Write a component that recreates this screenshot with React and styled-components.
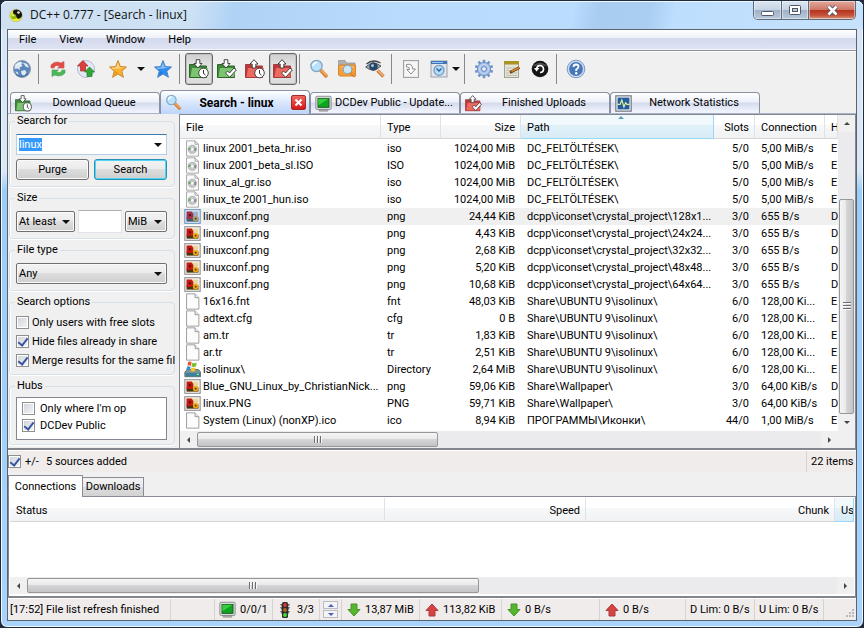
import React, { useEffect, useRef } from 'react';
import styled, { createGlobalStyle, css } from 'styled-components';

const GlobalStyle = createGlobalStyle`
  * { box-sizing: border-box; }
  body {
    margin: 0;
    background: #1d2b3c;
    font-family: Roboto, "Liberation Sans", sans-serif;
    font-size: 11px;
    line-height: 14px;
    color: #000;
  }
  button, input, select, table { font: inherit; color: inherit; }
  svg { display: block; flex: none; }
`;

/* ---------- window frame ---------- */

const Window = styled.div`
  min-height: 100vh;
  display: flex;
  flex-direction: column;
  border: 1px solid #1d2b3c;
  border-radius: 7px;
  padding: 0 6px 6px;
  background: linear-gradient(180deg, #d5e5f7 0, #dbe8f6 170px, #9cccf8 190px, #a9d3fb 100%);
  box-shadow: inset 0 0 0 1px #eef7ff;
`;

const TitleBar = styled.header`
  height: 28px;
  margin: 0 -6px;
  padding-left: 8px;
  display: flex;
  align-items: flex-start;
  gap: 7px;
  border-radius: 6px 6px 0 0;
  box-shadow: inset 0 1px 0 #f0f8ff;
  background: linear-gradient(100deg, #cfe0f1 0, #cde1f5 190px, #b0d3f5 230px, #b9dcfd 400px, #badcfd 565px, #a8cdf1 590px, #a9cef2 640px, #bddefd 665px, #c6e2fc 100%);
`;

const Title = styled.h1`
  flex: 1;
  margin: 0;
  padding-top: 5px;
  font: 12px/18px "Open Sans", "Noto Sans", sans-serif;
  color: #111;
`;

const TitleIcon = styled.span`
  padding-top: 7px;
`;

const Caption = styled.div`
  display: flex;
  height: 19px;
  margin-right: 7px;
  border: 1px solid #5e6b7c;
  border-top: 0;
  border-radius: 0 0 5px 5px;
  overflow: hidden;
`;

const CaptionButton = styled.button`
  width: ${(p) => (p.$close ? 47 : 27)}px;
  padding: 0;
  border: 0;
  border-left: ${(p) => (p.$first ? '0' : '1px solid #5e6b7c')};
  display: grid;
  place-items: center;
  box-shadow: inset 0 0 0 1px rgba(255, 255, 255, 0.45);
  background: ${(p) =>
    p.$close
      ? 'linear-gradient(#e3a99b, #cf7767 48%, #b5301a 50%, #c5533d 80%, #d99a7e)'
      : 'linear-gradient(#dde7f2, #c7d4e4 48%, #a0b1c8 50%, #b9c9dc)'};
`;

const Client = styled.div`
  flex: 1;
  display: flex;
  flex-direction: column;
  min-width: 0;
  border: 1px solid #59646f;
  background: #f0f0f0;
`;

/* ---------- menu and toolbar ---------- */

const MenuBar = styled.nav`
  display: flex;
  height: 21px;
  padding-left: 3px;
  border-bottom: 1px solid #8d8f94;
  box-shadow: inset 0 -1px 0 #f4f6fb;
  background: linear-gradient(#fff, #eef1f8 40%, #d4daed 42%, #dfe4f4);
`;

const MenuItem = styled.button`
  border: 0;
  padding: 0 8px;
  margin-right: 7px;
  background: none;
`;

const ToolBar = styled.div`
  display: flex;
  height: 39px;
  padding-top: 2px;
  box-shadow: inset 0 1px 0 #fff;
`;

const ToolButton = styled.button`
  width: 28px;
  height: 32px;
  padding: 0;
  border: 1px solid transparent;
  border-radius: 3px;
  background: none;
  display: grid;
  place-items: center;
  ${(p) =>
    p.$pressed &&
    css`
      border-color: #63656a;
      background: linear-gradient(#cfcfcf, #e2e2e2 40%, #dcdcdc);
      box-shadow: inset 0 0 0 1px #c0c0c0;
    `}
`;

const DropButton = styled(ToolButton)`
  width: ${(p) => p.$width}px;
  margin-left: ${(p) => (p.$tight ? -4 : 0)}px;
`;

const ToolGap = styled.span`
  width: 4px;
`;

const ToolSeparator = styled.span`
  width: 1px;
  height: 30px;
  margin: 1px 5px 0 2px;
  background: #86888c;
`;

const Triangle = styled.span`
  width: 0;
  height: 0;
  border: ${(p) => p.$size || 4}px solid transparent;
  ${(p) => (p.$dir === 'up' ? 'border-top-width: 0' : p.$dir === 'left' ? 'border-left-width: 0' : p.$dir === 'right' ? 'border-right-width: 0' : 'border-bottom-width: 0')};
  border-${(p) => ({ up: 'bottom', left: 'right', right: 'left' }[p.$dir] || 'top')}-color: ${(p) => p.$color || '#111'};
`;

/* ---------- window tabs ---------- */

const TabStrip = styled.div`
  display: flex;
  align-items: flex-end;
  height: 24px;
  padding-left: 2px;
  border-bottom: 1px solid #a9b4cc;
`;

const Tab = styled.div`
  width: 150px;
  height: ${(p) => (p.$active ? 24 : 21)}px;
  margin-bottom: ${(p) => (p.$active ? -1 : 0)}px;
  display: flex;
  align-items: center;
  padding: 0 3px 0 4px;
  border: 1px solid #8b90a0;
  border-bottom: 0;
  border-radius: 4px 4px 0 0;
  font-weight: ${(p) => (p.$active ? 'bold' : 'normal')};
  font-size: ${(p) => (p.$active ? 12 : 11)}px;
  background: ${(p) =>
    p.$active
      ? 'linear-gradient(#fff, #d9e7fc 50%, #bdd5fb)'
      : 'linear-gradient(#fff, #edf0f9 46%, #d3daec 50%, #e4e9f6 75%, #f3f6fd)'};
`;

const TabLabel = styled.button`
  flex: 1;
  min-width: 0;
  padding: 0;
  border: 0;
  background: none;
  white-space: nowrap;
`;

const TabClose = styled.button`
  width: 15px;
  height: 15px;
  padding: 0;
  border: 1px solid #a32a25;
  border-radius: 2px;
  display: grid;
  place-items: center;
  background: linear-gradient(#ee6a60, #d8171a);
`;

/* ---------- search panel ---------- */

const Workspace = styled.main`
  flex: 1;
  display: flex;
  min-height: 0;
  border-bottom: 2px solid #83868c;
`;

const SearchPanel = styled.form`
  width: 171px;
  padding: 0 4px 0 1px;
  display: flex;
  flex-direction: column;
  gap: 4px;
`;

const Group = styled.fieldset`
  min-width: 0;
  margin: 0;
  padding: ${(p) => (p.$compact ? '4px 7px 4px 6px' : '6px 7px 6px 6px')};
  border: 1px solid #d5dfe5;
  border-radius: 4px;
  box-shadow: inset 1px 0 0 #fff, 0 1px 0 #fff;
`;

const Legend = styled.legend`
  padding: 0 2px;
  margin-left: -1px;
`;

const Row = styled.div`
  display: flex;
  gap: ${(p) => p.$gap || 0}px;
  margin-top: ${(p) => p.$top || 0}px;
`;

const Combo = styled.div`
  display: flex;
  flex: 1;
  min-width: 0;
  height: 21px;
  border: 1px solid #b5cfe7;
  border-top-color: #3d7bad;
  background: #fff;
`;

const ComboInput = styled.input`
  flex: 1;
  min-width: 0;
  height: 15px;
  margin: 2px 0 0 2px;
  padding: 0;
  border: 0;
  outline: 0;
  &::selection { background: #3399ff; color: #fff; }
`;

const ComboArrow = styled.button`
  width: 16px;
  padding: 0;
  border: 0;
  background: none;
  display: grid;
  place-items: center;
`;

const PushButton = styled.button`
  flex: 1;
  height: 21px;
  padding: 0;
  border: 1px solid ${(p) => (p.$default ? '#2a8fb5' : '#707070')};
  border-radius: 3px;
  background: linear-gradient(#f3f3f3, #ebebeb 48%, #dddddd 50%, #cfcfcf);
  box-shadow: inset 0 0 0 1px ${(p) => (p.$default ? '#52d4f9' : '#fafafa')};
`;

const Picker = styled.div`
  width: ${(p) => (p.$width ? `${p.$width}px` : 'auto')};
  flex: ${(p) => (p.$width ? 'none' : '1')};
  display: grid;
  align-items: center;
  > * { grid-area: 1 / 1; }
  > span { justify-self: end; margin-right: 5px; pointer-events: none; }
`;

const Select = styled.select`
  appearance: none;
  width: 100%;
  height: 21px;
  padding: 0 2px;
  border: 1px solid #707070;
  border-radius: 2px;
  background: linear-gradient(#f3f3f3, #ebebeb 48%, #dddddd 50%, #cfcfcf);
  box-shadow: inset 0 0 0 1px #fafafa;
`;

const SizeInput = styled.input`
  flex: 1;
  min-width: 0;
  height: 23px;
  margin: -1px 0;
  border: 1px solid #e2e3ea;
  border-top-color: #abadb3;
  background: #fff;
`;

const CheckLine = styled.label`
  display: flex;
  align-items: center;
  gap: ${(p) => p.$gap || 3}px;
  height: ${(p) => p.$height}px;
  white-space: nowrap;
`;

const CheckBox = styled.input`
  appearance: none;
  flex: none;
  width: 13px;
  height: 13px;
  margin: 0;
  border: 1px solid #8e8f8f;
  box-shadow: inset 0 0 0 1px #fff;
  background: linear-gradient(135deg, #cdd2da, #f6f6f8);
  display: grid;
  place-items: center;
  &:checked::after {
    content: '';
    width: 4px;
    height: 8px;
    margin-bottom: 2px;
    border: solid #3c55a0;
    border-width: 0 2px 2px 0;
    transform: rotate(38deg);
  }
`;

const HubBox = styled.div`
  height: 43px;
  padding: 2px 5px;
  border: 1px solid #828790;
  background: #fff;
`;

/* ---------- results ---------- */

const ListFrame = styled.section`
  flex: 1;
  min-width: 0;
  display: grid;
  grid-template: minmax(0, 1fr) 17px / minmax(0, 1fr) 17px;
  border: 1px solid #828790;
  border-bottom: 0;
  background: #fff;
`;

const Scroller = styled.div`
  overflow: hidden;
`;

const Table = styled.table`
  width: 100%;
  table-layout: fixed;
  border-collapse: separate;
  border-spacing: 0;
`;

const HeadCell = styled.th`
  height: 24px;
  padding: 2px 5px 0 6px;
  font-weight: normal;
  text-align: ${(p) => p.$align || 'left'};
  white-space: nowrap;
  overflow: hidden;
  border-right: 1px solid ${(p) => (p.$hot ? '#96d9f9' : '#e0e3e6')};
  border-bottom: 1px solid ${(p) => (p.$hot ? '#96d9f9' : '#d5d5d5')};
  background: ${(p) =>
    p.$hot
      ? 'linear-gradient(#f2f9fc 0, #f2f9fc 42%, #e1f1f9 44%, #d8ecf6)'
      : 'linear-gradient(#fff 0, #fff 42%, #f7f8fa 44%, #f1f2f4)'};
`;

const SortedHead = styled.div`
  display: flex;
  position: relative;
  > span:last-child { position: absolute; left: 50%; top: -5px; }
`;

const Cell = styled.td`
  height: 17px;
  padding: 0 ${(p) => (p.$align ? 6 : 0)}px 0 6px;
  text-align: ${(p) => p.$align || 'left'};
  white-space: nowrap;
  overflow: hidden;
  text-overflow: ellipsis;
  background: ${(p) => (p.$marked ? '#f0f0f0' : 'transparent')};
`;

const FileCell = styled.div`
  display: flex;
  align-items: center;
  gap: 2px;
  height: 17px;
  margin-left: -2px;
`;

const Gutter = styled.tr`
  height: 1px;
`;

const HBar = styled.div`
  display: flex;
  align-items: center;
  height: 17px;
  min-width: 0;
  background: #ebebed;
`;

const VBar = styled(HBar)`
  flex-direction: column;
  height: auto;
`;

const BarCorner = styled.span`
  background: #f0f0f0;
`;

const BarButton = styled.button`
  width: 17px;
  height: 17px;
  flex: none;
  padding: 0;
  border: 0;
  display: grid;
  place-items: center;
  background: #f0f0f0;
`;

const Space = styled.span`
  flex: ${(p) => p.$grow};
`;

const Thumb = styled.div`
  flex: ${(p) => p.$grow};
  display: flex;
  flex-direction: ${(p) => (p.$vertical ? 'column' : 'row')};
  align-items: center;
  justify-content: center;
  gap: 1px;
  ${(p) => (p.$vertical ? 'width: 15px' : 'height: 15px')};
  border: 1px solid #979797;
  border-radius: 2px;
  background: linear-gradient(${(p) => (p.$vertical ? '90deg' : '180deg')}, #f5f5f5, #e9e9eb 48%, #d5d5d8 50%, #c4c4c8);
  > i {
    ${(p) => (p.$vertical ? 'width: 8px; height: 2px' : 'width: 2px; height: 7px')};
    background: linear-gradient(${(p) => (p.$vertical ? '180deg' : '90deg')}, #6c6c70 50%, #f8f8f8 50%);
  }
`;

/* ---------- status strips and transfer view ---------- */

const Strip = styled.div`
  display: flex;
  align-items: stretch;
  height: 22px;
  border-top: 1px solid #fff;
  background: #f0eceb;
`;

const StripCell = styled.div`
  flex: ${(p) => (p.$width ? `0 0 ${p.$width}px` : '1')};
  display: flex;
  align-items: center;
  gap: ${(p) => p.$gap || 4}px;
  padding-left: ${(p) => (p.$pad === undefined ? 4 : p.$pad)}px;
  white-space: nowrap;
  border-right: ${(p) => (p.$last ? '0' : '1px solid #d6d3d2')};
`;

const LowerTabs = styled.div`
  display: flex;
  align-items: flex-end;
  height: 25px;
  border-bottom: 1px solid #898c95;
`;

const LowerTab = styled.button`
  height: ${(p) => (p.$active ? 22 : 19)}px;
  width: ${(p) => p.$width}px;
  margin-bottom: ${(p) => (p.$active ? -1 : 0)}px;
  padding: 0;
  border: 1px solid #898c95;
  border-bottom: 0;
  border-left-width: ${(p) => (p.$active ? 1 : 0)}px;
  background: ${(p) => (p.$active ? '#fff' : 'linear-gradient(#f2f2f2, #ebebeb 48%, #ddd 50%, #d2d2d2)')};
`;

const Transfers = styled.section`
  height: 101px;
  display: flex;
  flex-direction: column;
  padding: 1px 1px 2px;
  border: solid #83868c;
  border-width: 0 1px 2px;
  background: #fff;
`;

const Spinner = styled.span`
  display: flex;
  flex-direction: column;
  gap: 1px;
`;

const SpinButton = styled.button`
  width: 15px;
  height: 8px;
  padding: 0;
  border: 1px solid #b9bcc4;
  background: #f4f4f6;
  display: grid;
  place-items: center;
`;

const Grip = styled.span`
  margin: auto 1px 1px auto;
`;

/* ---------- drawings ---------- */

const Svg = ({ size = 20, children }) => (
  <svg width={size} height={size} viewBox="0 0 20 20" fill="none" aria-hidden="true">
    {children}
  </svg>
);

const AppIcon = () => (
  <svg width="14" height="14" viewBox="0 0 14 14">
    <circle cx="7" cy="7.5" r="6.3" fill="#e8ec38" stroke="#b6b98c" strokeWidth="0.7" />
    <path d="M5 2C9 0 14 4 13 8C11 12 7 11 7 8C4 6 3 4 5 2Z" fill="#151515" />
    <circle cx="4.7" cy="8.5" r="2.6" fill="#91b808" />
    <circle cx="4.2" cy="7.6" r="1" fill="#f7ff9c" />
    <circle cx="9.5" cy="4.5" r="1.3" fill="#e8e8e8" />
  </svg>
);
const Globe = () => (
  <Svg>
    <circle cx="10" cy="10" r="8.5" fill="#5b87ba" stroke="#8f9cae" />
    <path d="M3 6Q6 2 10 3L9 5L10.500 7L7.500 8.500L8 11L5.500 9.500L2.500 10ZM12 4L15 5L17 8.500L14 8L12.500 6ZM9 12L13 11L14.500 13.500L12 17L9.500 15ZM3.500 12L6 13.500L6.500 16L4.500 14.500Z" fill="#dfe9f3" />
    <path d="M2.500 7Q8 1 16 5.500Q9 4 2.500 7Z" fill="#fff" fillOpacity="0.450" />
    <path d="M4 15.500Q10 19.500 16 15" stroke="#305a92" strokeOpacity="0.700" />
  </Svg>
);
const Refresh = () => (
  <Svg>
    <path d="M3 9V6Q7 1.5 13 4L16 2.5V9H9.5L11.5 7.3Q7 5 6 9Z" fill="#e34b45" stroke="#c8605c" strokeWidth="0.7" />
    <path d="M17 11V14Q13 18.500 7 16L4 17.500V11H10.500L8.500 12.700Q13 15 14 11Z" fill="#49b857" stroke="#55a360" strokeWidth="0.7" />
  </Svg>
);
const Reconnect = () => (
  <Svg>
    <circle cx="10" cy="10" r="8.500" fill="#e3e8f5" stroke="#b3bbd4" />
    <path d="M7 1.500L12 7H9.500V12H4.500V7H1.500Z" fill="#dc3f3b" stroke="#b12a2a" strokeWidth="0.700" />
    <path d="M13.500 8L18.500 13H16V17.500H11V13H8.500Z" fill="#31a836" stroke="#1f7e25" strokeWidth="0.700" />
  </Svg>
);
const Star = ({ fill, line, shade }) => (
  <Svg>
    <path d="M10 1.500L12.400 7.600L18.500 8L13.800 12.200L15.400 18.300L10 15L4.600 18.300L6.200 12.200L1.500 8L7.600 7.600Z" fill={fill} stroke={line} />
    <path d="M10 3.500L11.700 8.300L16.500 8.800Q10 9.500 4.500 10L3.500 8.800L8.300 8.300Z" fill="#fff" fillOpacity="0.450" />
    <path d="M10 14L6 16.500L7.300 12L14.500 16.500Z" fill={shade} fillOpacity="0.500" />
  </Svg>
);
const Folder = ({ up, red, check, size }) => (
  <Svg size={size}>
    <path d="M0.500 18.500V5.500H6L7.500 7H17.500V18.500Z" fill={red ? '#b93a3a' : '#3f8739'} stroke={red ? '#a33c3c' : '#2d6428'} />
    <path d="M3 9H19L17 18H1.500Z" fill={red ? '#ee6a60' : '#7cc470'} />
    {up ? (
      <path d="M9 0.700L13 5H10.800V9H7.200V5H5Z" fill="#fff" stroke="#333" strokeWidth="0.900" />
    ) : (
      <path d="M7.200 0.700H10.800V4.500H13L9 9L5 4.500H7.200Z" fill="#fff" stroke="#333" strokeWidth="0.900" />
    )}
    {check ? (
      <path d="M8.500 14L10.500 12L12.500 14L17 9L19.300 11L12.700 18.300Z" fill="#fff" stroke="#333" strokeWidth="0.900" />
    ) : (
      <>
        <circle cx="14.500" cy="14" r="4.800" fill="#fff" stroke="#333" strokeWidth="0.900" />
        <path d="M14.500 11V14.500L16.500 16" stroke="#333" />
      </>
    )}
  </Svg>
);
const Magnifier = ({ size }) => (
  <Svg size={size}>
    <path d="M11.500 11L18 18" stroke="#cf7d35" strokeWidth="3.600" />
    <path d="M12 11L18 17" stroke="#f8a556" strokeWidth="1.800" />
    <circle cx="7.500" cy="7" r="5.600" fill="#b9e2fa" stroke="#82a3bd" strokeWidth="1.300" />
    <path d="M4 7Q4.500 3.500 8 3.500" stroke="#fff" strokeWidth="1.500" />
  </Svg>
);
const FolderSearch = () => (
  <Svg>
    <path d="M1.500 1.500H8L9.500 4H18V14H1.500Z" fill="#b0b0b0" stroke="#8d8d8d" strokeWidth="0.700" />
    <path d="M1.500 7L3 6H18.500V17H3L1.500 16Z" fill="#f4a13c" stroke="#d98526" />
    <path d="M3 8H17" stroke="#fbc47c" />
    <circle cx="10.500" cy="10.500" r="4.300" fill="#c8e8fa" stroke="#76a2c2" />
    <path d="M13.500 13.500L18 17.500" stroke="#d87718" strokeWidth="2.600" />
    <path d="M14 13.500L18 17" stroke="#f8b56e" />
  </Svg>
);
const EyeSearch = () => (
  <Svg>
    <path d="M0.700 8Q8 1 16 7Q8 14.500 0.700 8Z" fill="#a5b0b9" stroke="#4b535b" />
    <circle cx="8.500" cy="7.500" r="4.300" fill="#2c4762" />
    <circle cx="7.500" cy="6.500" r="1.500" fill="#9fc8e8" />
    <path d="M1.500 5Q8-0.500 15.500 4" stroke="#444" strokeWidth="1.400" />
    <path d="M12.500 11.500L18.500 17.500" stroke="#c87a38" strokeWidth="3.400" />
    <path d="M13 11.500L18.500 17" stroke="#f8b474" strokeWidth="1.600" />
  </Svg>
);
const OpenList = () => (
  <Svg>
    <rect x="2.500" y="1.500" width="15" height="17" fill="#e9e9e9" stroke="#a2a2a2" />
    <rect x="4" y="3" width="12" height="14" fill="#f6f6f6" />
    <path d="M5.500 5.500Q11.500 4 11.500 10H14.500L10 15L5.800 10.500H8.500Q9 7.500 5.500 8Z" fill="#fff" stroke="#8c8c8c" />
  </Svg>
);
const RecentWindow = () => (
  <Svg>
    <rect x="2" y="2" width="16" height="16" fill="#e3e5e9" stroke="#9aa1ab" />
    <rect x="2" y="2" width="16" height="3" fill="#3f76b9" />
    <path d="M3 3.500H14" stroke="#9cc3ec" />
    <circle cx="10" cy="11.300" r="5" fill="#b4dcf8" stroke="#6f9dc9" strokeWidth="1.300" />
    <path d="M7.500 9.500L10 12L12.500 9.500" stroke="#275b8d" strokeWidth="1.300" />
  </Svg>
);
const Gear = () => (
  <Svg>
    {[0, 36, 72, 108, 144].map((a) => (
      <path key={a} d="M10 0.800V19.200" stroke="#7193c9" strokeWidth="2.600" transform={`rotate(${a} 10 10)`} />
    ))}
    <circle cx="10" cy="10" r="6.600" fill="#a4bfe8" stroke="#7193c9" />
    <circle cx="10" cy="10" r="4.500" stroke="#c7d9f3" strokeWidth="1.200" />
    <circle cx="10" cy="10" r="2.400" fill="#f0f0f0" stroke="#6387c0" />
  </Svg>
);
const Notepad = () => (
  <Svg>
    <rect x="2.500" y="2.500" width="14" height="16" fill="#e4e4d8" stroke="#a3a394" />
    <rect x="2" y="2" width="15" height="3.500" fill="#a99321" />
    <path d="M4 9H15M4 11.500H15M4 14H15M4 16.500H15" stroke="#b4b7ac" strokeWidth="0.800" />
    <path d="M8 13.500L17.500 8.500" stroke="#754013" strokeWidth="2.600" />
    <path d="M9.500 12.500L17.500 8.500" stroke="#f09a2d" strokeWidth="1.200" />
  </Svg>
);
const Reload = () => (
  <Svg>
    <circle cx="10" cy="10" r="8.300" fill="#161616" />
    <path d="M2.500 7.500Q10 0 17.500 7.500Q10 5.500 2.500 7.500Z" fill="#777" fillOpacity="0.600" />
    <path d="M6.500 10Q7 6.500 10 6.500Q13.500 7 13.500 10.300Q13.500 13.500 10 13.500" stroke="#fff" strokeWidth="1.700" />
    <path d="M4 9H9.500L6.500 12.500Z" fill="#fff" />
  </Svg>
);
const Help = () => (
  <Svg>
    <circle cx="10" cy="10" r="8.800" fill="#cddcf0" stroke="#7d9bc4" strokeWidth="1" />
    <circle cx="10" cy="10" r="6.900" fill="#4878b8" />
    <path d="M7.500 8Q7.500 5.500 10 5.500Q12.500 5.500 12.500 7.700Q12.500 9 10.200 10.500V12" stroke="#fff" strokeWidth="1.800" />
    <circle cx="10.200" cy="14.200" r="1.200" fill="#fff" />
  </Svg>
);
const Monitor = () => (
  <Svg size={17}>
    <path d="M5 17H15V19H5Z" fill="#b5b5b5" stroke="#777" strokeWidth="0.700" />
    <rect x="1" y="1.500" width="18" height="15.500" rx="1.500" fill="#dedfe0" stroke="#7d8082" />
    <rect x="3.500" y="4" width="13" height="10.500" fill="#10a321" stroke="#164b1a" />
    <path d="M4 4.500H16L4 12Z" fill="#35cf3d" />
  </Svg>
);
const StatsIcon = () => (
  <Svg size={17}>
    <rect x="1" y="1" width="18" height="18" fill="#fff" stroke="#777b80" strokeWidth="1.500" />
    <rect x="3" y="3" width="14" height="14" fill="#245d9e" />
    <path d="M3 11H6L8 6L10.500 14L12.500 9L14 11H17" stroke="#e5f296" strokeWidth="1.400" />
  </Svg>
);
const DiscFile = () => (
  <Svg size={17}>
    <path d="M3 1H13L17 5V19H3Z" fill="#fbfbfb" stroke="#999" />
    <path d="M13 1V5H17" stroke="#999" />
    <circle cx="9.800" cy="11" r="5" fill="#c3c7c6" stroke="#a4a8a8" strokeWidth="0.700" />
    <path d="M9.800 11L5.500 8.500L5 12Z" fill="#6fa566" />
    <path d="M9.800 11L14.500 9L14 13.500Z" fill="#868c8a" />
    <circle cx="9.800" cy="11" r="1.600" fill="#fff" />
  </Svg>
);
const BlankFile = () => (
  <Svg size={17}>
    <path d="M3 1H13L17.500 5.500V19H3Z" fill="#fcfcfc" stroke="#8e8e8e" />
    <path d="M13 1V5.500H17.500" fill="#e9e9e9" stroke="#8e8e8e" />
  </Svg>
);
const ImageFile = ({ marked }) => (
  <Svg size={17}>
    <rect x="1" y="2" width="18" height="16" fill="#fff" stroke={marked ? '#6e9cc9' : '#9b9b9b'} strokeWidth="1.500" />
    <rect x="3" y="4" width="14" height="12" fill={marked ? '#9fb0c9' : '#e9d7a2'} />
    <path d="M3 11H17V16H3Z" fill={marked ? '#436070' : '#453412'} />
    <path d="M3 4H9L11 7V10L8.500 13H3Z" fill={marked ? '#a0304c' : '#c41710'} />
    <circle cx="7" cy="8.500" r="1.300" fill="#4d1311" />
    <circle cx="13.700" cy="12.500" r="3.200" fill={marked ? '#a9a16e' : '#f2a511'} />
    <circle cx="13.700" cy="12.500" r="1.100" fill="#5c2c08" />
  </Svg>
);
const DriveFile = () => (
  <Svg size={17}>
    <path d="M1 13L4 10H17L19.500 13V18.500H1Z" fill="#7d9299" stroke="#53666d" />
    <rect x="2" y="14" width="17" height="4" fill="#3c7f9d" />
    <rect x="15" y="15" width="2.500" height="1.500" fill="#7dfa7a" />
    <path d="M5 1Q7 0 9 1.500L8 6Q6 4.500 4 5.500Z" fill="#e8562a" />
    <path d="M9.800 2Q12 3 15 2L14 6.500Q11 7.500 8.800 6.500Z" fill="#79bf34" />
    <path d="M3.700 6.500Q6 5.500 7.800 7L7 11Q5 9.500 2.500 10.500Z" fill="#3490dc" />
    <path d="M8.600 7.500Q11 8.500 13.700 7.500L12.700 12Q9.500 13 7.700 11.500Z" fill="#f9c61f" />
  </Svg>
);
const Arrow = ({ up }) => (
  <svg width="14" height="14" viewBox="0 0 14 14">
    {up ? (
      <path d="M7 1L13 7.500H10V13H4V7.500H1Z" fill="#d84242" stroke="#a73c3c" />
    ) : (
      <path d="M4 1H10V6.500H13L7 13L1 6.500H4Z" fill="#55b82c" stroke="#4a8e2e" />
    )}
  </svg>
);
const TrafficLight = () => (
  <svg width="12" height="16" viewBox="0 0 12 16">
    <path d="M1 2H11L9 5H11L9 9H11L8 14H4L1 9H3L1 5H3Z" fill="#666" />
    <rect x="3" y="0" width="6" height="16" rx="1.500" fill="#2d2d2d" />
    <circle cx="6" cy="3" r="1.900" fill="#d83a2e" />
    <circle cx="6" cy="8" r="1.900" fill="#b06a1e" />
    <circle cx="6" cy="13" r="2" fill="#39e03c" />
  </svg>
);
const GripDots = () => (
  <svg width="10" height="10" viewBox="0 0 10 10" fill="#b9b9b9">
    <path d="M7 0h2v2h-2zM4 3h2v2h-2zM7 3h2v2h-2zM1 6h2v2h-2zM4 6h2v2h-2zM7 6h2v2h-2z" />
  </svg>
);

/* ---------- data ---------- */

const iso = (name, type) => [name, type, '1024,00 MiB', 'DC_FELTÖLTÉSEK\\', '5/0', '5,00 MiB/s', 'E', 'disc'];
const conf = (size, dir) => ['linuxconf.png', 'png', size, `dcpp\\iconset\\crystal_project\\${dir}...`, '3/0', '655 B/s', 'D', 'image'];
const boot = (name, type, size, icon = 'blank') => [name, type, size, 'Share\\UBUNTU 9\\isolinux\\', '6/0', '128,00 Ki...', 'E', icon];

const RESULTS = [
  iso('linux 2001_beta_hr.iso', 'iso'),
  iso('linux 2001_beta_sl.ISO', 'ISO'),
  iso('linux_al_gr.iso', 'iso'),
  iso('linux_te 2001_hun.iso', 'iso'),
  conf('24,44 KiB', '128x1'),
  conf('4,43 KiB', '24x24'),
  conf('2,68 KiB', '32x32'),
  conf('5,20 KiB', '48x48'),
  conf('10,68 KiB', '64x64'),
  boot('16x16.fnt', 'fnt', '48,03 KiB'),
  boot('adtext.cfg', 'cfg', '0 B'),
  boot('am.tr', 'tr', '1,83 KiB'),
  boot('ar.tr', 'tr', '2,51 KiB'),
  boot('isolinux\\', 'Directory', '2,64 MiB', 'drive'),
  ['Blue_GNU_Linux_by_ChristianNick...', 'png', '59,06 KiB', 'Share\\Wallpaper\\', '3/0', '64,00 KiB/s', 'D', 'image'],
  ['linux.PNG', 'PNG', '59,71 KiB', 'Share\\Wallpaper\\', '3/0', '64,00 KiB/s', 'D', 'image'],
  ['System (Linux) (nonXP).ico', 'ico', '8,94 KiB', 'ПРОГРАММЫ\\Иконки\\', '44/0', '1,00 MiB/s', 'E', 'blank'],
];

const FILE_ICONS = { disc: DiscFile, image: ImageFile, blank: BlankFile, drive: DriveFile };
const SELECTED_ROW = 4;
const COLUMNS = [
  ['File', 201],
  ['Type', 60],
  ['Size', 80, 'right'],
  ['Path', 193],
  ['Slots', 41, 'right'],
  ['Connection', 70],
  ['H'],
];

const TABS = [
  ['Download Queue', <Folder size={17} />],
  ['Search - linux', <Magnifier size={17} />],
  ['DCDev Public - Update...', <Monitor />],
  ['Finished Uploads', <Folder size={17} up red check />],
  ['Network Statistics', <StatsIcon />],
];

const Tool = ({ label, pressed, children }) => (
  <ToolButton type="button" title={label} aria-label={label} aria-pressed={pressed} $pressed={pressed}>
    {children}
  </ToolButton>
);

const Grooves = () => (
  <>
    <i />
    <i />
    <i />
  </>
);

const ScrollEnd = ({ dir }) => (
  <BarButton type="button" aria-label={`Scroll ${dir}`}>
    <Triangle $dir={dir} $size={3} $color="#444" />
  </BarButton>
);

function SearchForm() {
  const query = useRef(null);
  useEffect(() => {
    query.current.focus();
    query.current.select();
  }, []);

  return (
    <SearchPanel onSubmit={(e) => e.preventDefault()}>
      <Group>
        <Legend>Search for</Legend>
        <Row>
          <Combo>
            <ComboInput ref={query} aria-label="Search for" defaultValue="linux" />
            <ComboArrow type="button" aria-label="Previous searches">
              <Triangle />
            </ComboArrow>
          </Combo>
        </Row>
        <Row $gap={5} $top={4}>
          <PushButton type="button">Purge</PushButton>
          <PushButton $default>Search</PushButton>
        </Row>
      </Group>
      <Group>
        <Legend>Size</Legend>
        <Row $gap={3}>
          <Picker $width={59}>
            <Select aria-label="Size mode">
              <option>At least</option>
            </Select>
            <Triangle />
          </Picker>
          <SizeInput aria-label="Size value" />
          <Picker $width={42}>
            <Select aria-label="Size unit">
              <option>MiB</option>
            </Select>
            <Triangle />
          </Picker>
        </Row>
      </Group>
      <Group>
        <Legend>File type</Legend>
        <Row>
          <Picker>
            <Select aria-label="File type">
              <option>Any</option>
            </Select>
            <Triangle />
          </Picker>
        </Row>
      </Group>
      <Group $compact>
        <Legend>Search options</Legend>
        <CheckLine $height={19}>
          <CheckBox type="checkbox" />
          Only users with free slots
        </CheckLine>
        <CheckLine $height={19}>
          <CheckBox type="checkbox" defaultChecked />
          Hide files already in share
        </CheckLine>
        <CheckLine $height={19}>
          <CheckBox type="checkbox" defaultChecked />
          Merge results for the same fil
        </CheckLine>
      </Group>
      <Group $compact>
        <Legend>Hubs</Legend>
        <HubBox>
          <CheckLine $height={17} $gap={5}>
            <CheckBox type="checkbox" />
            Only where I'm op
          </CheckLine>
          <CheckLine $height={17} $gap={5}>
            <CheckBox type="checkbox" defaultChecked />
            DCDev Public
          </CheckLine>
        </HubBox>
      </Group>
    </SearchPanel>
  );
}

function Results() {
  return (
    <ListFrame>
      <Scroller>
        <Table>
          <colgroup>
            {COLUMNS.map(([name, width]) => (
              <col key={name} width={width} />
            ))}
          </colgroup>
          <thead>
            <tr>
              {COLUMNS.map(([name, , align]) => (
                <HeadCell key={name} $align={align} $hot={name === 'Path'}>
                  {name === 'Path' ? (
                    <SortedHead>
                      {name}
                      <Triangle $dir="up" $size={3} $color="#5b9fbd" />
                    </SortedHead>
                  ) : (
                    name
                  )}
                </HeadCell>
              ))}
            </tr>
          </thead>
          <tbody>
            <Gutter />
            {RESULTS.map((row, i) => {
              const Icon = FILE_ICONS[row[7]];
              const marked = i === SELECTED_ROW;
              return (
                <tr key={row[0] + row[2]}>
                  {COLUMNS.map(([name, , align], c) => (
                    <Cell key={name} $align={align} $marked={marked}>
                      {c === 0 ? (
                        <FileCell>
                          <Icon marked={marked} />
                          {row[0]}
                        </FileCell>
                      ) : (
                        row[c]
                      )}
                    </Cell>
                  ))}
                </tr>
              );
            })}
          </tbody>
        </Table>
      </Scroller>
      <VBar>
        <ScrollEnd dir="up" />
        <Space $grow={67} />
        <Thumb $vertical $grow={214}>
          <Grooves />
        </Thumb>
        <ScrollEnd dir="down" />
      </VBar>
      <HBar>
        <ScrollEnd dir="left" />
        <Thumb $grow={239}>
          <Grooves />
        </Thumb>
        <Space $grow={383} />
        <ScrollEnd dir="right" />
      </HBar>
      <BarCorner />
    </ListFrame>
  );
}

export default function App() {
  return (
    <Window>
      <GlobalStyle />
      <TitleBar>
        <TitleIcon>
          <AppIcon />
        </TitleIcon>
        <Title>DC++ 0.777 - [Search - linux]</Title>
        <Caption>
          <CaptionButton type="button" aria-label="Minimize" $first>
            <svg width="13" height="13" viewBox="0 0 13 13">
              <rect x="0.500" y="7.500" width="12" height="4" rx="1" fill="#fff" stroke="#535666" />
            </svg>
          </CaptionButton>
          <CaptionButton type="button" aria-label="Restore">
            <svg width="12" height="11" viewBox="0 0 12 11">
              <rect x="0.500" y="0.500" width="11" height="9" rx="1" fill="#fff" stroke="#535666" />
              <rect x="3.500" y="3.500" width="5" height="3" fill="#b7c9de" stroke="#535666" />
            </svg>
          </CaptionButton>
          <CaptionButton type="button" aria-label="Close" $close>
            <svg width="13" height="11" viewBox="0 0 13 11">
              <path d="M2.500 1.500L10.500 9.500M10.500 1.500L2.500 9.500" stroke="#535666" strokeWidth="4.400" />
              <path d="M2.500 1.500L10.500 9.500M10.500 1.500L2.500 9.500" stroke="#fff" strokeWidth="2.600" />
            </svg>
          </CaptionButton>
        </Caption>
      </TitleBar>
      <Client>
        <MenuBar>
          {['File', 'View', 'Window', 'Help'].map((m) => (
            <MenuItem key={m} type="button">
              {m}
            </MenuItem>
          ))}
        </MenuBar>
        <ToolBar>
          <Tool label="Public hubs"><Globe /></Tool>
          <ToolSeparator />
          <Tool label="Reconnect"><Refresh /></Tool>
          <Tool label="Follow redirect"><Reconnect /></Tool>
          <ToolGap />
          <Tool label="Favorite hubs"><Star fill="#fbb02d" line="#c98a2c" shade="#e07d10" /></Tool>
          <DropButton type="button" aria-label="Favorite hubs menu" $width={17}>
            <Triangle />
          </DropButton>
          <Tool label="Favorite users"><Star fill="#2e8df0" line="#4b87c5" shade="#1566cc" /></Tool>
          <ToolSeparator />
          <Tool label="Download queue" pressed><Folder /></Tool>
          <Tool label="Finished downloads"><Folder check /></Tool>
          <Tool label="Waiting users"><Folder up red /></Tool>
          <Tool label="Finished uploads" pressed><Folder up red check /></Tool>
          <ToolSeparator />
          <Tool label="Search"><Magnifier /></Tool>
          <Tool label="ADL search"><FolderSearch /></Tool>
          <Tool label="Search spy"><EyeSearch /></Tool>
          <ToolSeparator />
          <Tool label="Open file list"><OpenList /></Tool>
          <Tool label="Recent windows"><RecentWindow /></Tool>
          <DropButton type="button" aria-label="Recent windows menu" $width={13} $tight>
            <Triangle />
          </DropButton>
          <ToolSeparator />
          <Tool label="Settings"><Gear /></Tool>
          <Tool label="Notepad"><Notepad /></Tool>
          <Tool label="Refresh file list"><Reload /></Tool>
          <ToolSeparator />
          <Tool label="Help"><Help /></Tool>
        </ToolBar>
        <TabStrip>
          {TABS.map(([name, icon], i) => (
            <Tab key={name} $active={i === 1}>
              {icon}
              <TabLabel type="button">{name}</TabLabel>
              {i === 1 && (
                <TabClose type="button" aria-label="Close tab">
                  <svg width="9" height="9" viewBox="0 0 9 9">
                    <path d="M1.500 1.500L7.500 7.500M7.500 1.500L1.500 7.500" stroke="#fff" strokeWidth="2" />
                  </svg>
                </TabClose>
              )}
            </Tab>
          ))}
        </TabStrip>
        <Workspace>
          <SearchForm />
          <Results />
        </Workspace>
        <Strip>
          <StripCell as="label" $width={34} $pad={0} $last>
            <CheckBox type="checkbox" defaultChecked />
            +/-
          </StripCell>
          <StripCell>5 sources added</StripCell>
          <StripCell $width={49} $last>22 items</StripCell>
        </Strip>
        <LowerTabs>
          <LowerTab type="button" $active $width={75}>Connections</LowerTab>
          <LowerTab type="button" $width={61}>Downloads</LowerTab>
        </LowerTabs>
        <Transfers>
          <Table>
            <colgroup>
              <col width="375" />
              <col width="201" />
              <col />
              <col width="19" />
            </colgroup>
            <thead>
              <tr>
                <HeadCell>Status</HeadCell>
                <HeadCell $align="right">Speed</HeadCell>
                <HeadCell $align="right">Chunk</HeadCell>
                <HeadCell $hot>Us</HeadCell>
              </tr>
            </thead>
          </Table>
          <Space $grow={1} />
          <HBar>
            <ScrollEnd dir="left" />
            <Thumb $grow={452}>
              <Grooves />
            </Thumb>
            <Space $grow={359} />
            <ScrollEnd dir="right" />
          </HBar>
        </Transfers>
        <Strip>
          <StripCell $width={163} $pad={2}>[17:52] File list refresh finished</StripCell>
          <StripCell $width={44} />
          <StripCell $width={58}><Monitor />0/0/1</StripCell>
          <StripCell $width={47} $pad={6} $gap={6}><TrafficLight />3/3</StripCell>
          <StripCell $width={22} $pad={3}>
            <Spinner>
              <SpinButton type="button" aria-label="More slots"><Triangle $dir="up" $size={3} $color="#4862b5" /></SpinButton>
              <SpinButton type="button" aria-label="Fewer slots"><Triangle $size={3} $color="#4862b5" /></SpinButton>
            </Spinner>
          </StripCell>
          <StripCell $width={78} $pad={5}><Arrow />13,87 MiB</StripCell>
          <StripCell $width={82} $pad={5}><Arrow up />113,82 KiB</StripCell>
          <StripCell $width={98} $pad={5}><Arrow />0 B/s</StripCell>
          <StripCell $width={86} $pad={5}><Arrow up />0 B/s</StripCell>
          <StripCell $width={69}>D Lim: 0 B/s</StripCell>
          <StripCell $width={69}>U Lim: 0 B/s</StripCell>
          <StripCell $last><Grip><GripDots /></Grip></StripCell>
        </Strip>
      </Client>
    </Window>
  );
}
